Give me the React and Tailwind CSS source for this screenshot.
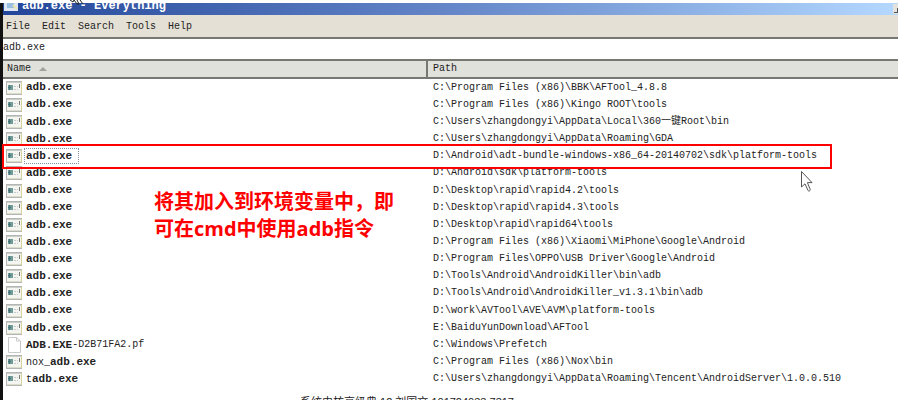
import React from "react";

const files = [
  ["", "adb.exe", "", "C:\\Program Files (x86)\\BBK\\AFTool_4.8.8"],
  ["", "adb.exe", "", "C:\\Program Files (x86)\\Kingo ROOT\\tools"],
  ["", "adb.exe", "", "C:\\Users\\zhangdongyi\\AppData\\Local\\360一键Root\\bin"],
  ["", "adb.exe", "", "C:\\Users\\zhangdongyi\\AppData\\Roaming\\GDA"],
  ["", "adb.exe", "", "D:\\Android\\adt-bundle-windows-x86_64-20140702\\sdk\\platform-tools"],
  ["", "adb.exe", "", "D:\\Android\\sdk\\platform-tools"],
  ["", "adb.exe", "", "D:\\Desktop\\rapid\\rapid4.2\\tools"],
  ["", "adb.exe", "", "D:\\Desktop\\rapid\\rapid4.3\\tools"],
  ["", "adb.exe", "", "D:\\Desktop\\rapid\\rapid64\\tools"],
  ["", "adb.exe", "", "D:\\Program Files (x86)\\Xiaomi\\MiPhone\\Google\\Android"],
  ["", "adb.exe", "", "D:\\Program Files\\OPPO\\USB Driver\\Google\\Android"],
  ["", "adb.exe", "", "D:\\Tools\\Android\\AndroidKiller\\bin\\adb"],
  ["", "adb.exe", "", "D:\\Tools\\Android\\AndroidKiller_v1.3.1\\bin\\adb"],
  ["", "adb.exe", "", "D:\\work\\AVTool\\AVE\\AVM\\platform-tools"],
  ["", "adb.exe", "", "E:\\BaiduYunDownload\\AFTool"],
  ["", "ADB.EXE", "-D2B71FA2.pf", "C:\\Windows\\Prefetch"],
  ["nox_", "adb.exe", "", "C:\\Program Files (x86)\\Nox\\bin"],
  ["t", "adb.exe", "", "C:\\Users\\zhangdongyi\\AppData\\Roaming\\Tencent\\AndroidServer\\1.0.0.510"],
];
const SELECTED = 4;

function ExeIcon() {
  return (
    <svg width="16" height="14" viewBox="0 0 16 14" className="block shrink-0" aria-hidden="true">
      <rect x="0.5" y="0.5" width="15" height="13" fill="#f4f5f1" stroke="#b3b6b3" />
      <path d="M1 1.5H15" stroke="#c9cecb" />
      <path d="M15.5 1V13" stroke="#d8d49a" />
      <rect x="2" y="4" width="5" height="5" fill="#6f9c98" />
      <path d="M3.5 4V9M2 6.5H5" stroke="#4b747a" />
      <path d="M8 5.5H10M8 8.5H10M11 5.5H12M11 8.5H12" stroke="#c3cbcb" />
      <path d="M13.5 3V7" stroke="#77797a" />
      <path d="M1 12.5H15" stroke="#dcdccb" />
    </svg>
  );
}

function PageIcon() {
  return (
    <svg width="16" height="16" viewBox="0 0 16 16" className="block shrink-0" aria-hidden="true">
      <path d="M2.5 0.5H10.500L14.500 4V15.5H2.5Z" fill="#fff" stroke="#c9c9c9" />
      <path d="M10.500 0.5V4H14.500" fill="none" stroke="#c9c9c9" />
    </svg>
  );
}

function Pointer({ className }) {
  return (
    <svg width="14" height="23" viewBox="0 0 14 23" className={className} aria-hidden="true">
      <path
        d="M1.5 1.5V17L5 13.8L8 20.5C8.6 21.6 10.7 20.8 10.2 19.4L7.4 12.6H12Z"
        fill="#fff"
        stroke="#555"
        strokeWidth="1"
      />
    </svg>
  );
}

export default function App() {
  return (
    <div className="relative flex h-screen flex-col overflow-hidden bg-white font-['Liberation_Mono','Noto_Sans_CJK_SC',monospace] text-[10px] text-[#222]">
      <div className="h-[3px] shrink-0" />
      <main className="flex min-h-0 flex-1 flex-col border-l-[3px] border-[#111]">
        <header className="flex h-3 shrink-0 items-end justify-between overflow-hidden bg-linear-to-r from-[#24469a] via-[#6586c8] to-[#b4d8ff]">
          <div className="flex items-end gap-1">
            <svg width="14" height="14" viewBox="0 0 14 14" className="mb-1 ml-px" aria-hidden="true">
              <rect width="14" height="14" fill="#dbe7f4" />
              <rect x="3" y="3" width="7" height="8" fill="#9bbfe0" />
              <path d="M9 8L13 12" stroke="#eee6a8" strokeWidth="2" />
            </svg>
            <h1 className="whitespace-pre pb-px text-xs font-bold text-white">adb.exe - Everything</h1>
          </div>
          <svg width="5" height="10" viewBox="0 0 5 10" className="mb-px" aria-hidden="true">
            <rect width="5" height="10" fill="#e4e2dc" />
            <path d="M1 8.5H5M4.5 4V8" stroke="#555" />
          </svg>
        </header>
        <nav className="flex h-[22px] shrink-0 items-center gap-3 bg-[#e5e0d5] pl-[3px]">
          {["File", "Edit", "Search", "Tools", "Help"].map((item) => (
            <button key={item} type="button">{item}</button>
          ))}
        </nav>
        <input
          aria-label="Search"
          defaultValue="adb.exe"
          className="h-[22px] w-full shrink-0 border-t-2 border-[#777872] bg-white pb-1 outline-none"
        />
        <div className="min-h-0 flex-1">
          <table className="h-full w-full table-fixed border-separate border-spacing-0 text-left whitespace-nowrap">
            <colgroup>
              <col className="w-[425px]" />
              <col />
            </colgroup>
            <thead>
              <tr className="bg-[#e1e1dc]">
                <th className="h-5 border-y-2 border-r-2 border-[#777872] p-0 pl-1 leading-4 font-normal">
                  <span className="flex items-center gap-2">
                    Name
                    <svg width="8" height="4" viewBox="0 0 8 4" aria-hidden="true">
                      <path d="M0 4L4 0L8 4Z" fill="#a2a29c" />
                    </svg>
                  </span>
                </th>
                <th className="h-5 border-y-2 border-[#777872] p-0 pl-[5px] leading-4 font-normal">Path</th>
              </tr>
            </thead>
            <tbody>
              {files.map(([before, match, after, path], i) => (
                <tr key={i}>
                  <td className="relative p-0 pl-[3px]">
                    <div className="flex h-4 items-center gap-0.5">
                      {after ? <PageIcon /> : <ExeIcon />}
                      <span
                        className={
                          i === SELECTED
                            ? "flex h-4 items-center border border-dotted border-[#8090a8] pr-1.5 pl-px"
                            : "flex h-4 items-center border border-transparent pl-px"
                        }
                      >
                        {before}
                        <b className="text-[11px]">{match}</b>
                        {after}
                      </span>
                    </div>
                    {i === SELECTED && (
                      <div className="pointer-events-none absolute -inset-y-1 -left-px z-10 w-[830px] border-2 border-[#f00]" />
                    )}
                  </td>
                  <td className="p-0 pl-[5px] leading-4">{path}</td>
                </tr>
              ))}
            </tbody>
          </table>
        </div>
        <footer className="h-3 shrink-0 overflow-hidden pt-1.5 pl-[297px] font-['Liberation_Sans','Noto_Sans_CJK_SC',sans-serif] text-[11px] leading-4">
          系统由核高级典 12 刘国文 101724033 7317
        </footer>
      </main>
      <p className="absolute top-[188px] left-[154px] w-[250px] font-['Open_Sans','Noto_Sans_CJK_SC',sans-serif] text-xl leading-[27px] font-bold text-[#f00]">
        将其加入到环境变量中，即
        <br />
        可在cmd中使用adb指令
      </p>
      <Pointer className="absolute top-[170px] left-[800px]" />
      <svg width="16" height="5" viewBox="0 0 16 5" className="absolute top-0 left-[69px]" aria-hidden="true">
        <path d="M1 0L4 2L5 0L8 4H10L8 0M11 0L14 4" fill="none" stroke="#222" />
      </svg>
    </div>
  );
}
